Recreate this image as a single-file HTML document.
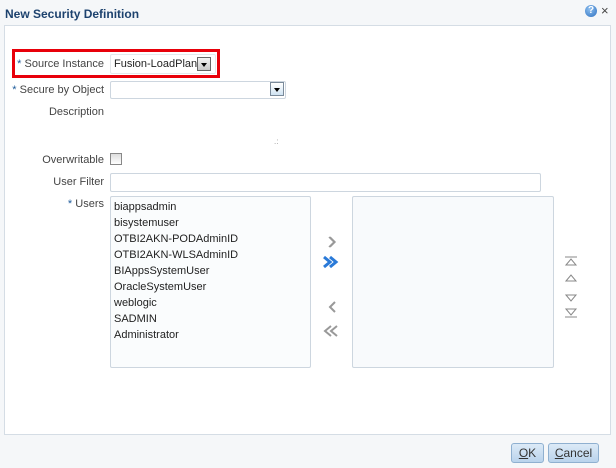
<html><head><style>
body{margin:0;width:616px;height:468px;background:#f5f7f9;font-family:"Liberation Sans",sans-serif;font-size:11px;color:#333;position:relative;overflow:hidden}
.a{position:absolute;white-space:nowrap}
.lbl{position:absolute;text-align:right;width:104px;left:0;color:#444;white-space:nowrap}
.inp{position:absolute;background:#fff;border:1px solid #cdd6df;border-radius:2px;box-sizing:border-box}
.dd{position:absolute;width:14px;height:14px;border:1px solid #7a8a9a;background:linear-gradient(#fff,#cfe3f3);box-sizing:border-box}
.dd:after{content:"";position:absolute;left:3px;top:5px;border-left:3px solid transparent;border-right:3px solid transparent;border-top:4px solid #000}
.btn{position:absolute;height:20px;border:1px solid #8fb0d0;border-radius:3px;background:linear-gradient(#dceaf7,#b9d3ec);box-sizing:border-box;text-align:center;line-height:18px;color:#333;font-size:12px}
.li{line-height:16px;color:#222}
</style></head><body>
<div class="a" style="left:5px;top:7px;font-weight:bold;color:#1d426e;font-size:12px">New Security Definition</div>
<div class="a" style="left:585px;top:5px;width:12px;height:12px;border-radius:50%;background:radial-gradient(circle at 40% 35%,#8ec0f0,#2d6fbf);color:#fff;font-size:10px;font-weight:bold;text-align:center;line-height:12px">?</div>
<div class="a" style="left:601px;top:3px;font-size:13px;color:#444">×</div>
<div class="a" style="left:4px;top:25px;width:607px;height:410px;background:#fff;border:1px solid #d5dde5;box-sizing:border-box"></div>
<div class="a" style="left:12px;top:49px;width:208px;height:29px;border:3px solid #e8000a;box-sizing:border-box"></div>
<div class="lbl" style="top:58px"><span style="color:#1d5a9a">* </span>Source Instance</div>
<div class="inp" style="left:110px;top:54px;width:106px;height:20px;border-color:#e4e8ec"></div>
<div class="a" style="left:114px;top:58px;color:#222;font-size:11px">Fusion-LoadPlan</div>
<div class="dd" style="left:197px;top:57px;border-color:#666;background:linear-gradient(#f4f4f4,#c8c8c8)"></div>
<div class="lbl" style="top:84px"><span style="color:#1d5a9a">* </span>Secure by Object</div>
<div class="inp" style="left:110px;top:81px;width:176px;height:18px"></div>
<div class="dd" style="left:270px;top:82px"></div>
<div class="lbl" style="top:106px">Description</div>
<div class="a" style="left:274px;top:137px;font-size:8px;color:#999">.:</div>
<div class="lbl" style="top:154px">Overwritable</div>
<div class="a" style="left:110px;top:153px;width:12px;height:12px;border:1px solid #888;background:linear-gradient(#ddd,#fff);box-sizing:border-box"></div>
<div class="lbl" style="top:176px">User Filter</div>
<div class="inp" style="left:110px;top:173px;width:431px;height:19px"></div>
<div class="lbl" style="top:198px"><span style="color:#1d5a9a">* </span>Users</div>
<div class="inp" style="left:110px;top:196px;width:201px;height:172px;padding:2px 0 0 3px;background:#fafcfd">
<div class="li">biappsadmin</div><div class="li">bisystemuser</div><div class="li">OTBI2AKN-PODAdminID</div><div class="li">OTBI2AKN-WLSAdminID</div><div class="li">BIAppsSystemUser</div><div class="li">OracleSystemUser</div><div class="li">weblogic</div><div class="li">SADMIN</div><div class="li">Administrator</div></div>
<div class="inp" style="left:352px;top:196px;width:202px;height:172px;background:#f8fafc"></div>
<svg class="a" style="left:320px;top:230px" width="30" height="115">
<path d="M9 7l5 5-5 5M10 7l5 5-5 5" stroke="#999" fill="none" stroke-width="1.5"/>
<path d="M4 27l6 5-6 5M10 27l6 5-6 5" stroke="#2a7ad8" fill="none" stroke-width="3"/>
<path d="M15 72l-5 5 5 5" stroke="#999" fill="none" stroke-width="2"/>
<path d="M11 96l-6 5 6 5M17 96l-6 5 6 5" stroke="#999" fill="none" stroke-width="2"/>
</svg>
<svg class="a" style="left:562px;top:255px" width="20" height="65">
<path d="M3 2h12M4 10l5-6 5 6z M4 26l5-6 5 6z M4 40l5 6 5-6z M4 54l5 6 5-6z M3 62h12" stroke="#888" fill="none"/>
</svg>
<div class="btn" style="left:511px;top:443px;width:33px"><u>O</u>K</div>
<div class="btn" style="left:548px;top:443px;width:51px"><u>C</u>ancel</div>
</body></html>
